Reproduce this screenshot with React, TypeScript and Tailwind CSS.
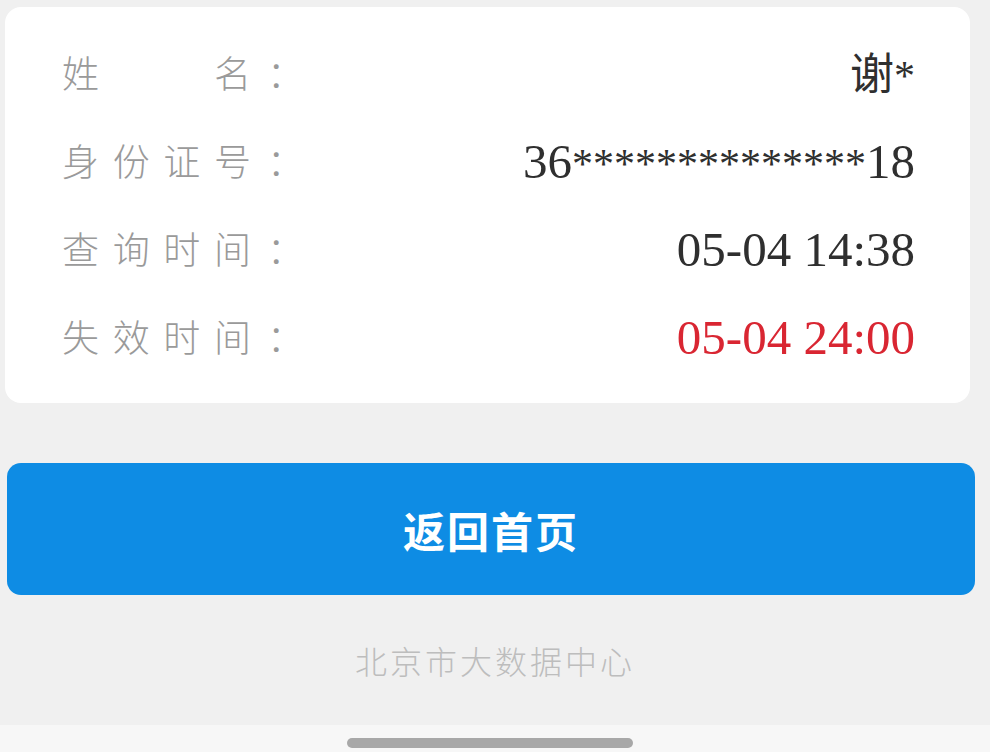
const labelFont = { fontFamily: '"Noto Sans CJK SC", sans-serif' };
const valueFont = { fontFamily: '"Liberation Serif", "Noto Sans CJK SC", serif' };

function Row({ label, children, red }: { label: string[]; children: React.ReactNode; red?: boolean }) {
  return (
    <div className="flex h-[88px] items-center justify-between">
      <div className="flex items-center text-[37px] font-light text-[#9a9a9a]" style={labelFont}>
        <div className="flex w-[189px] justify-between">
          {label.map((c, i) => (
            <span key={i}>{c}</span>
          ))}
        </div>
        <span className="ml-[16px]">：</span>
      </div>
      <div
        className={`text-[49px] leading-none ${red ? "text-[#d92632]" : "text-[#2f2f2f]"}`}
        style={valueFont}
      >
        {children}
      </div>
    </div>
  );
}

export default function App() {
  return (
    <div className="flex h-[752px] w-[990px] flex-col bg-[#f0f0f0]">
      <div className="flex-1">
        <div className="ml-[5px] mt-[7px] w-[965px] rounded-[16px] bg-white py-[22px] pl-[57px] pr-[55px]">
          <Row label={["姓", "名"]}>
            <span className="text-[44px]">谢</span>
            <span className="text-[42px]">*</span>
          </Row>
          <Row label={["身", "份", "证", "号"]}>
            36<span className="text-[42px]">**************</span>18
          </Row>
          <Row label={["查", "询", "时", "间"]}>05-04 14:38</Row>
          <Row label={["失", "效", "时", "间"]} red>
            05-04 24:00
          </Row>
        </div>
        <button
          className="ml-[7px] mt-[60px] flex h-[132px] w-[968px] items-center justify-center rounded-[14px] bg-[#0e8ce4] text-[42px] font-bold tracking-[2px] text-white"
          style={labelFont}
        >
          返回首页
        </button>
        <div
          className="mt-[45px] text-center text-[32px] font-light leading-[40px] tracking-[3px] text-[#bdbdbd]"
          style={labelFont}
        >
          北京市大数据中心
        </div>
      </div>
      <div className="flex h-[27px] bg-[#f7f7f7] pl-[347px]">
        <div className="mt-[13px] h-[10px] w-[286px] rounded-full bg-[#a8a8a8]" />
      </div>
    </div>
  );
}
